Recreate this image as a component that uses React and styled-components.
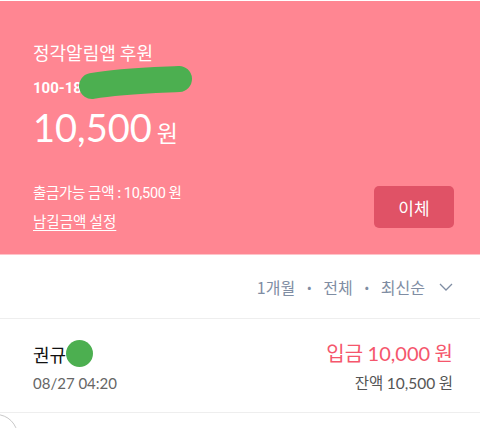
import React from 'react';
import styled, {createGlobalStyle} from 'styled-components';

const GlobalStyle = createGlobalStyle`
body{
  margin:0;
  background:#fff;
  font-family:"Noto Sans CJK KR","Noto Sans",sans-serif;
}
`;

const Page = styled.div`
width:480px;
height:428px;
overflow:hidden;
position:relative;
padding-top:1px;
box-sizing:border-box;
`;

const Header = styled.div`
background-color:#FF8692;
height:254px;
box-sizing:border-box;
padding:38px 26px 0 33px;
display:flex;
flex-direction:column;
border-bottom:1px solid #FFC3C9;
color:#fff;
`;

const Title = styled.div`
font-size:18px;
line-height:26px;
`;

const Account = styled.div`
position:relative;
font-family:Roboto,sans-serif;
font-weight:700;
font-size:15px;
line-height:20px;
margin-top:13px;
`;

const Blob = styled.svg`
position:absolute;
left:46px;
top:-12px;
`;

const Amount = styled.div`
display:flex;
align-items:baseline;
margin-top:7px;
font-family:Lato,sans-serif;
font-size:38px;
line-height:44px;
`;

const Won = styled.span`
font-family:"Noto Sans CJK KR",sans-serif;
font-size:23px;
margin-left:5px;
`;

const Bottom = styled.div`
display:flex;
justify-content:space-between;
align-items:flex-end;
margin-top:28px;
`;

const Info = styled.div`
display:flex;
flex-direction:column;
gap:8px;
`;

const Available = styled.div`
font-size:14.5px;
line-height:19px;
letter-spacing:-0.3px;
`;

const Num = styled.span`
font-family:Roboto,sans-serif;
`;

const SetLink = styled.a`
color:#fff;
font-size:14.5px;
line-height:20px;
text-decoration:underline;
text-underline-offset:3px;
`;

const Button = styled.button`
width:80px;
height:42px;
border:none;
border-radius:5px;
background-color:#E05266;
color:#fff;
font-family:"Noto Sans CJK KR",sans-serif;
font-size:17px;
margin-bottom:3px;
`;

const Filter = styled.div`
height:63px;
display:flex;
justify-content:flex-end;
align-items:center;
padding-right:27px;
gap:12px;
color:#7F8DA3;
font-size:16px;
border-bottom:1.5px solid #EEEEEE;
`;

const Dot = styled.span`
font-size:12px;
`;

const Row = styled.div`
height:94px;
box-sizing:border-box;
display:flex;
justify-content:space-between;
align-items:center;
padding:2px 27px 0 33px;
border-bottom:1.5px solid #EEEEEE;
`;

const Col = styled.div`
display:flex;
flex-direction:column;
align-items:${props=>props.right ? 'flex-end' : 'flex-start'};
gap:6px;
`;

const Name = styled.div`
display:flex;
align-items:center;
font-size:18px;
line-height:26px;
color:#111;
`;

const GreenDot = styled.span`
display:inline-block;
width:27px;
height:27px;
border-radius:50%;
background:#4CAF50;
`;

const Date = styled.div`
font-family:Lato,sans-serif;
font-size:15px;
color:#666;
line-height:20px;
`;

const Deposit = styled.div`
font-size:20px;
line-height:26px;
color:#F5566C;
`;

const Balance = styled.div`
font-size:15.5px;
line-height:20px;
color:#555;
`;

const Lato = styled.span`
font-family:Lato,sans-serif;
`;

const Arc = styled.div`
position:absolute;
left:-26px;
top:414px;
width:42px;
height:42px;
border:1px solid #C8C8C8;
border-radius:50%;
`;

const App = () => {
  return (
    <Page>
      <GlobalStyle/>
      <Header>
        <Title>정각알림앱 후원</Title>
        <Account>
          100-18
          <Blob width="115" height="34" viewBox="0 0 115 34">
            <path d="M13 20 C40 15 80 14 100 13" stroke="#4CAF50" strokeWidth="26" strokeLinecap="round" fill="none"/>
          </Blob>
        </Account>
        <Amount>10,500<Won>원</Won></Amount>
        <Bottom>
          <Info>
            <Available>출금가능 금액 : <Num>10,500</Num> 원</Available>
            <SetLink>남길금액 설정</SetLink>
          </Info>
          <Button>이체</Button>
        </Bottom>
      </Header>
      <Filter>
        <span>1개월</span>
        <Dot>•</Dot>
        <span>전체</span>
        <Dot>•</Dot>
        <span>최신순</span>
        <svg width="14" height="8" viewBox="0 0 14 8" style={{marginLeft:2}}>
          <path d="M1 1 L7 7 L13 1" stroke="#7F8DA3" strokeWidth="1.3" fill="none"/>
        </svg>
      </Filter>
      <Row>
        <Col>
          <Name>권규<GreenDot/></Name>
          <Date>08/27 04:20</Date>
        </Col>
        <Col right>
          <Deposit>입금 <Lato>10,000</Lato> 원</Deposit>
          <Balance>잔액 <Lato>10,500</Lato> 원</Balance>
        </Col>
      </Row>
      <Arc/>
    </Page>
  );
};

export default App;
